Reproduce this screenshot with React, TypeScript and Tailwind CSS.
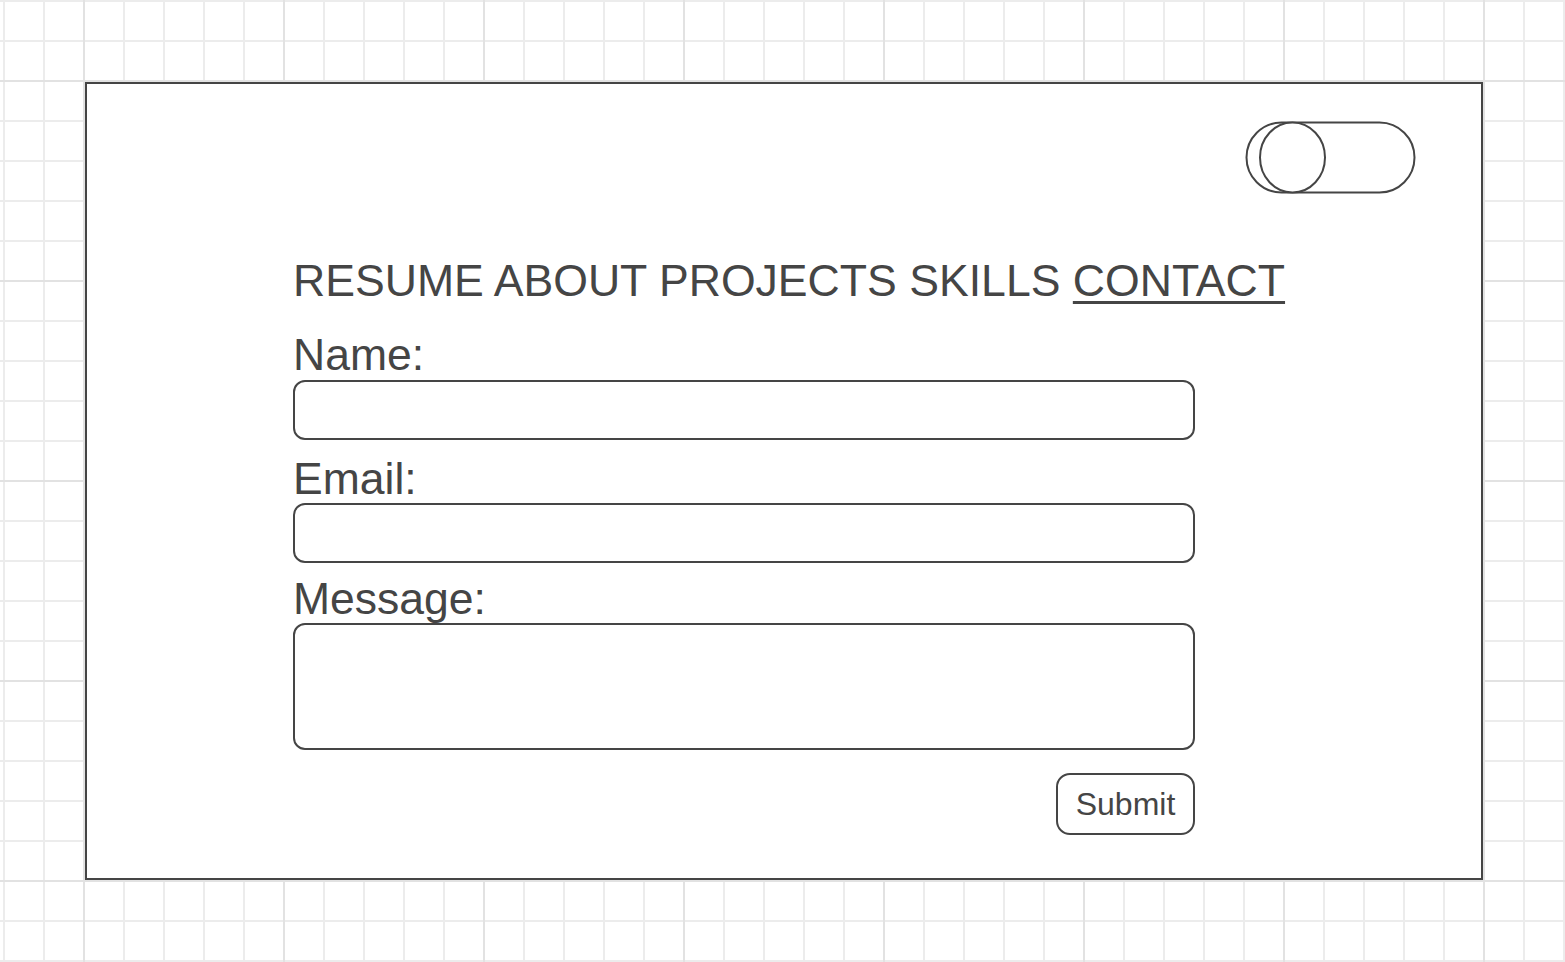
import React from 'react';

function Toggle() {
  return (
    <svg width="172" height="74" viewBox="0 0 172 74" fill="none" stroke="#454545" strokeWidth="2">
      <rect x="1.5" y="1.5" width="168" height="70" rx="35" fill="white" />
      <ellipse cx="47.5" cy="36.5" rx="32.5" ry="35" fill="white" />
    </svg>
  );
}

const navItems = ['RESUME', 'ABOUT', 'PROJECTS', 'SKILLS'];

export default function App() {
  return (
    <div
      className="w-full h-[962px] overflow-hidden bg-white text-[#454545] font-['Liberation_Sans',Arial,sans-serif] bg-[linear-gradient(to_right,#e2e2e2_2px,transparent_2px),linear-gradient(to_bottom,#e2e2e2_2px,transparent_2px),linear-gradient(to_right,#ececec_2px,transparent_2px),linear-gradient(to_bottom,#ececec_2px,transparent_2px)] bg-[size:200px_200px,200px_200px,40px_40px,40px_40px] bg-[position:83px_0px,0px_80px,3px_0px,0px_0px]"
    >
      <div className="pt-[82px] pl-[85px]">
        {/* mockup frame */}
        <div className="w-[1398px] h-[798px] border-2 border-[#454545] bg-white flex flex-col">
          <div className="self-end mr-[64px] mt-[37px]">
            <Toggle />
          </div>

          <div className="ml-[206px] w-[902px] mt-[64px] flex flex-col">
            <nav className="text-[44.6px] leading-[44px] whitespace-nowrap">
              {navItems.map((n) => (
                <span key={n}>{n} </span>
              ))}
              <span className="underline decoration-[3px] underline-offset-[5px]">CONTACT</span>
            </nav>

            <label className="mt-[30px] text-[44.5px] leading-[44px]">Name:</label>
            <input className="mt-[3px] h-[60px] w-full border-2 border-[#454545] rounded-[12px] outline-none" />

            <label className="mt-[17px] text-[44.5px] leading-[44px]">Email:</label>
            <input className="mt-[2px] h-[60px] w-full border-2 border-[#454545] rounded-[12px] outline-none" />

            <label className="mt-[14px] text-[44.5px] leading-[44px]">Message:</label>
            <textarea className="mt-[2px] h-[127px] w-full border-2 border-[#454545] rounded-[12px] outline-none resize-none" />

            <div className="mt-[23px] flex justify-end">
              <button className="w-[139px] h-[62px] border-2 border-[#454545] rounded-[14px] text-[32px] leading-none text-[#454545]">
                Submit
              </button>
            </div>
          </div>
        </div>
      </div>
    </div>
  );
}
